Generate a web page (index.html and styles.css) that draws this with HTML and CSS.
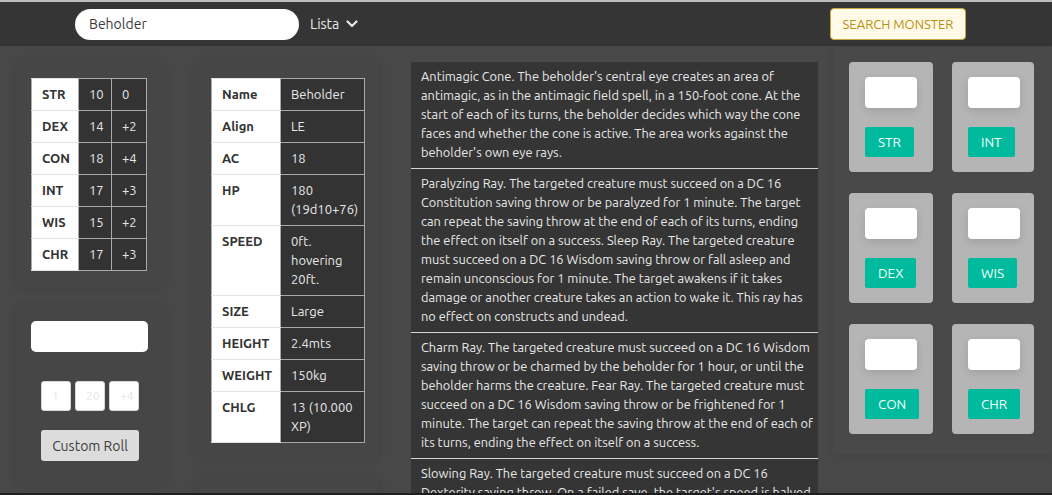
FILE: index.html
```html
<!DOCTYPE html>
<html>
<head>
<meta charset="utf-8">
<link rel="stylesheet" href="styles.css">
</head>
<body>
<header class="topbar">
  <div class="search-pill">Beholder</div>
  <div class="lista">Lista <svg class="chev" width="12" height="8" viewBox="0 0 12 8"><path d="M1.5 1.5 L6 6 L10.5 1.5" fill="none" stroke="#e8e8e8" stroke-width="2.2" stroke-linecap="round" stroke-linejoin="round"/></svg></div>
  <div class="spacer"></div>
  <button class="search-btn">SEARCH MONSTER</button>
</header>

<main class="layout">
  <section class="col col-a">
    <div class="card">
      <table class="grid stats">
        <colgroup><col class="c-lab"><col class="c-val"><col class="c-mod"></colgroup>
        <tr><th>STR</th><td>10</td><td>0</td></tr>
        <tr><th>DEX</th><td>14</td><td>+2</td></tr>
        <tr><th>CON</th><td>18</td><td>+4</td></tr>
        <tr><th>INT</th><td>17</td><td>+3</td></tr>
        <tr><th>WIS</th><td>15</td><td>+2</td></tr>
        <tr><th>CHR</th><td>17</td><td>+3</td></tr>
      </table>
    </div>
    <div class="card roll-card">
      <div class="roll-out"></div>
      <div class="dice-row">
        <div class="die">1</div>
        <div class="die">20</div>
        <div class="die">+4</div>
      </div>
      <button class="roll-btn">Custom Roll</button>
    </div>
  </section>

  <section class="col col-b">
    <div class="card">
      <table class="grid info">
        <colgroup><col class="i-lab"><col class="i-val"></colgroup>
        <tr><th>Name</th><td>Beholder</td></tr>
        <tr><th>Align</th><td>LE</td></tr>
        <tr><th>AC</th><td>18</td></tr>
        <tr><th>HP</th><td>180<br>(19d10+76)</td></tr>
        <tr><th>SPEED</th><td>0ft.<br>hovering<br>20ft.</td></tr>
        <tr><th>SIZE</th><td>Large</td></tr>
        <tr><th>HEIGHT</th><td>2.4mts</td></tr>
        <tr><th>WEIGHT</th><td>150kg</td></tr>
        <tr><th>CHLG</th><td>13 (10.000<br>XP)</td></tr>
      </table>
    </div>
    <div class="card card-next">
      <div class="next-chip"></div>
    </div>
  </section>

  <section class="col col-c">
    <div class="actions">
      <p class="action">Antimagic Cone. The beholder's central eye creates an area of<br>antimagic, as in the antimagic field spell, in a 150-foot cone. At the<br>start of each of its turns, the beholder decides which way the cone<br>faces and whether the cone is active. The area works against the<br>beholder's own eye rays.</p>
      <p class="action">Paralyzing Ray. The targeted creature must succeed on a DC 16<br>Constitution saving throw or be paralyzed for 1 minute. The target<br>can repeat the saving throw at the end of each of its turns, ending<br>the effect on itself on a success. Sleep Ray. The targeted creature<br>must succeed on a DC 16 Wisdom saving throw or fall asleep and<br>remain unconscious for 1 minute. The target awakens if it takes<br>damage or another creature takes an action to wake it. This ray has<br>no effect on constructs and undead.</p>
      <p class="action">Charm Ray. The targeted creature must succeed on a DC 16 Wisdom<br>saving throw or be charmed by the beholder for 1 hour, or until the<br>beholder harms the creature. Fear Ray. The targeted creature must<br>succeed on a DC 16 Wisdom saving throw or be frightened for 1<br>minute. The target can repeat the saving throw at the end of each of<br>its turns, ending the effect on itself on a success.</p>
      <p class="action">Slowing Ray. The targeted creature must succeed on a DC 16<br>Dexterity saving throw. On a failed save, the target's speed is halved<br>for 1 minute.</p>
    </div>
  </section>

  <section class="col col-d">
    <div class="checks">
      <div class="check"><div class="check-in"></div><button class="check-btn">STR</button></div>
      <div class="check"><div class="check-in"></div><button class="check-btn">INT</button></div>
      <div class="check"><div class="check-in"></div><button class="check-btn">DEX</button></div>
      <div class="check"><div class="check-in"></div><button class="check-btn">WIS</button></div>
      <div class="check"><div class="check-in"></div><button class="check-btn">CON</button></div>
      <div class="check"><div class="check-in"></div><button class="check-btn">CHR</button></div>
    </div>
  </section>
</main>
<div class="window-edge"></div>
</body>
</html>
```

FILE: styles.css
```css
* { box-sizing: border-box; }

html, body {
  margin: 0;
  padding: 0;
}

body {
  background: #484848;
  font-family: "Ubuntu", "Lato", "Noto Sans", sans-serif;
  font-size: 14px;
  color: #e6e6e6;
  overflow: hidden;
  height: 495px;
  border-top: 2px solid #bdbdbd;
}

.topbar {
  height: 44px;
  background: #353535;
  display: flex;
  align-items: center;
  padding: 0 86px 0 75px;
}

.search-pill {
  width: 224px;
  height: 31px;
  background: #fff;
  border-radius: 16px;
  color: #3a3a3a;
  font-size: 14px;
  line-height: 31px;
  padding-left: 14px;
}

.lista {
  margin-left: 11px;
  color: #ececec;
  font-size: 14px;
  display: flex;
  align-items: center;
  gap: 7px;
}

.spacer { flex: 1; }

.search-btn {
  width: 136px;
  height: 32px;
  background: #fffae8;
  border: 1px solid #c9a640;
  border-radius: 4px;
  color: #b89112;
  font-family: inherit;
  font-size: 13px;
  padding: 0;
}

.layout {
  display: grid;
  grid-template-columns: 180px 215px 438px 1fr;
  align-items: start;
}

.col { padding-top: 15px; }

.card {
  background: #464646;
  border-radius: 6px;
  box-shadow: 0 0 10px rgba(0,0,0,0.1);
  padding: 17px 15px;
  margin: 0 16px 17px 16px;
}

.grid {
  border-collapse: collapse;
  table-layout: fixed;
  font-size: 13px;
}

.grid th, .grid td {
  border: 1px solid #a9a9a9;
  text-align: left;
  vertical-align: top;
  padding: 6px 10px;
  line-height: 19px;
  white-space: nowrap;
}

.grid th {
  background: #fff;
  color: #333;
  font-weight: bold;
  border-color: #e2e2e2 #a9a9a9 #e2e2e2 #a9a9a9;
}

.grid td {
  background: #333333;
  color: #e8e8e8;
}

.stats { width: 115px; }
.c-lab { width: 47px; }
.c-val { width: 33px; }
.c-mod { width: 35px; }

.info { width: 153px; }
.i-lab { width: 69px; }
.i-val { width: 84px; }

.roll-card {
  padding: 16px 15px 26px 15px;
  display: flex;
  flex-direction: column;
  align-items: flex-start;
}

.roll-out {
  width: 117px;
  height: 31px;
  background: #fff;
  border-radius: 5px;
}

.dice-row {
  display: flex;
  gap: 4px;
  margin: 29px 0 0 10px;
}

.die {
  width: 30px;
  height: 30px;
  background: #fff;
  border: 1px solid #d8d8d8;
  border-radius: 3px;
  color: #e8e4e0;
  font-size: 12px;
  line-height: 28px;
  padding-left: 10px;
  overflow: hidden;
  white-space: nowrap;
}

.roll-btn {
  margin: 19px 0 0 10px;
  width: 98px;
  height: 31px;
  background: #dcdcdc;
  border: none;
  border-radius: 3px;
  color: #3c3c3c;
  font-family: inherit;
  font-size: 14px;
  padding: 0;
}

.card-next {
  padding-top: 19px;
  height: 60px;
}

.next-chip {
  width: 61px;
  height: 10px;
  background: #fff;
  border-radius: 3px 3px 0 0;
}

.actions {
  margin: 1px 15px 0 16px;
  background: #353535;
}

.action {
  margin: 0;
  padding: 5px 10px 6px 10px;
  line-height: 19px;
  font-size: 12.8px;
  color: #e8e8e8;
  border-bottom: 1px solid #d6d6d6;
  white-space: nowrap;
}

.col-d {
  padding-top: 1px;
}

.checks {
  padding: 15px 16px 20px 16px;
  display: grid;
  grid-template-columns: 84px 82px;
  column-gap: 19px;
  row-gap: 21px;
  background: #494949;
  box-shadow: 0 0 8px rgba(0,0,0,0.07);
}

.check {
  height: 110px;
  background: #b5b5b5;
  border-radius: 4px;
  padding: 15px 16px;
  display: flex;
  flex-direction: column;
  align-items: flex-start;
}

.check-in {
  width: 52px;
  height: 31px;
  background: #fff;
  border-radius: 4px;
  box-shadow: 0 3px 8px rgba(0,0,0,0.12);
}

.check-btn {
  margin-top: 19px;
  height: 31px;
  background: #00ba9d;
  border: none;
  border-radius: 2px;
  color: #f2fffb;
  font-family: inherit;
  font-size: 13.5px;
  padding: 0 13px;
}

.window-edge {
  position: fixed;
  left: 0;
  right: 0;
  bottom: 0;
  height: 2px;
  background: #1f1f1f;
}
```
